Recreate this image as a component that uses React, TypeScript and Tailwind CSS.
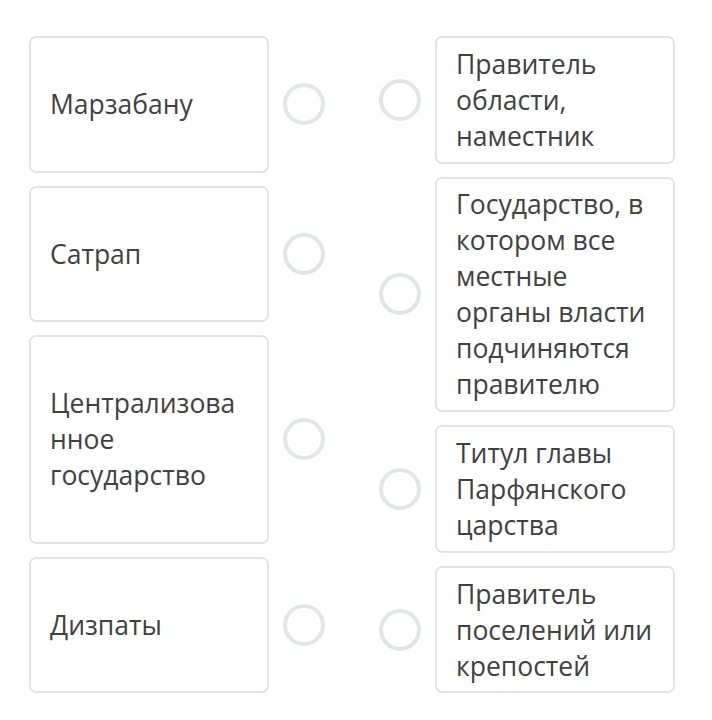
import React from 'react';

const leftItems = ['Марзабану', 'Сатрап', 'Централизованное государство', 'Дизпаты'];
const rightItems = [
    'Правитель области, наместник',
    'Государство, в котором все местные органы власти подчиняются правителю',
    'Титул главы Парфянского царства',
    'Правитель поселений или крепостей',
];

const Circle: React.FC = () => (
    <div className="w-[42px] h-[42px] shrink-0 rounded-full border-4 border-[#e2e5e8] bg-white" />
);

const Card: React.FC<{ text: string }> = ({ text }) => (
    <div className="w-[240px] self-stretch flex items-center border-2 border-[#e3e3e3] rounded-[7px] bg-white px-[19px] py-[7.8px]">
        <p className="w-full text-[26.5px] leading-[36px] text-[#3f4142] break-words">{text}</p>
    </div>
);

export default function App() {
    return (
        <div className="min-h-[720px] bg-white pt-[36px] px-[29px]" style={{ fontFamily: '"Open Sans", "Noto Sans", sans-serif' }}>
            <div className="flex items-stretch">
                <div className="flex flex-col gap-[13px]">
                    {leftItems.map(item => (
                        <div key={item} className="flex grow items-center">
                            <Card text={item} />
                            <div className="ml-[14px]">
                                <Circle />
                            </div>
                        </div>
                    ))}
                </div>
                <div className="ml-[54px] flex flex-col gap-[13px]">
                    {rightItems.map(item => (
                        <div key={item} className="flex grow items-center">
                            <Circle />
                            <div className="ml-[14px] self-stretch flex">
                                <Card text={item} />
                            </div>
                        </div>
                    ))}
                </div>
            </div>
        </div>
    );
}
